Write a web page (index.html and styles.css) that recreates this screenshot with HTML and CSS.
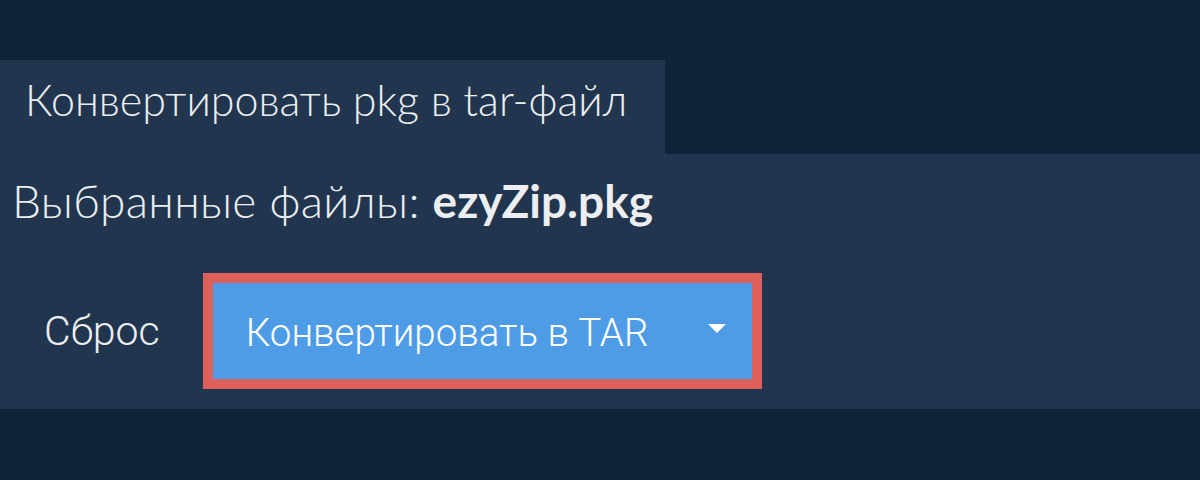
FILE: index.html
```html
<!DOCTYPE html>
<html lang="ru">
<head>
<meta charset="utf-8">
<title>Конвертировать pkg в tar-файл</title>
<link rel="stylesheet" href="styles.css">
</head>
<body>
<div class="page">
  <div class="tab">Конвертировать pkg в tar-файл</div>
  <div class="panel">
    <div class="selected">Выбранные файлы: <b>ezyZip.pkg</b></div>
    <div class="actions">
      <span class="reset">Сброс</span>
      <div class="convert-wrap">
        <div class="convert">
          <span class="convert-label">Конвертировать в TAR</span>
          <svg class="caret" width="18" height="9" viewBox="0 0 18 9"><path d="M0 0H18L9 9Z" fill="#ffffff"/></svg>
        </div>
      </div>
    </div>
  </div>
</div>
</body>
</html>
```

FILE: styles.css
```css
html, body {
  margin: 0;
  padding: 0;
  background: #0f2339;
}
.page {
  padding-top: 60px;
  font-family: Lato, "Noto Sans", sans-serif;
  color: #eceef1;
}
.tab {
  display: block;
  box-sizing: border-box;
  width: 665px;
  background: #21364e;
  font-size: 43px;
  line-height: 1.2;
  padding: 14px 0 28px 25px;
  white-space: nowrap;
  font-weight: 300;
}
.panel {
  background: #21364e;
  padding: 19px 0 20px 0;
}
.selected {
  padding-left: 12px;
  font-size: 46px;
  line-height: 1.2;
  font-weight: 300;
  letter-spacing: 0.3px;
  white-space: nowrap;
}
.selected b {
  font-weight: 700;
  letter-spacing: 0;
}
.actions {
  display: flex;
  align-items: center;
  margin-top: 45px;
  padding-left: 44px;
}
.reset {
  font-family: Roboto, sans-serif;
  font-weight: 300;
  font-size: 41px;
  margin-right: 43px;
}
.convert-wrap {
  border: 10px solid #dd605c;
}
.convert {
  display: flex;
  align-items: center;
  justify-content: space-between;
  width: 539px;
  height: 96px;
  box-sizing: border-box;
  padding: 0 26px 0 33px;
  background: #4e9be6;
  font-family: Roboto, sans-serif;
  font-weight: 300;
  font-size: 38.5px;
  color: #ffffff;
}
.convert-label {
  padding-top: 4px;
}
.caret {
  display: block;
  margin-top: -4px;
}
```
